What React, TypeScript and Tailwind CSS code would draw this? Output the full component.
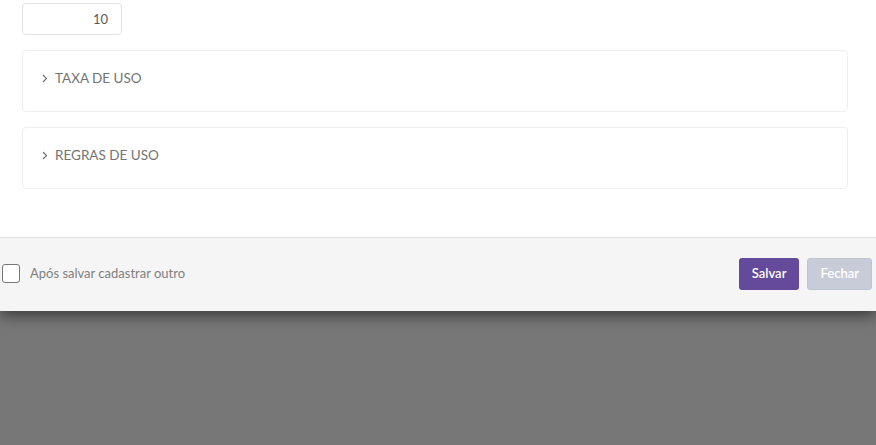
import React from 'react';

const Chevron: React.FC = () => (
  <svg width="6" height="9" viewBox="0 0 6 9" fill="none" className="shrink-0">
    <path d="M1 1l3.5 3.5L1 8" stroke="#6e6e6e" strokeWidth="1.1" />
  </svg>
);

const Section: React.FC<{ title: string }> = ({ title }) => (
  <div className="h-[62px] border border-[#eeeef4] rounded-[4px] flex items-center pl-[19px] pb-[5px] gap-[7px]">
    <Chevron />
    <span className="text-[13.5px] text-[#737373]">{title}</span>
  </div>
);

const App: React.FC = () => {
  return (
    <div className="h-[445px] bg-[#777777] overflow-hidden" style={{ fontFamily: 'Lato, "Open Sans", sans-serif' }}>
      <div className="bg-white shadow-[0_4px_14px_rgba(0,0,0,0.55)] relative">
        <div className="pl-[22px] pr-[28px] pt-[3px] pb-[48px] flex flex-col gap-[15px]">
          <input
            type="text"
            defaultValue="10"
            className="w-[100px] h-[32px] border border-[#e2e2e2] rounded-[4px] text-right pr-[13px] text-[13px] text-[#5a5a5a] outline-none"
          />
          <Section title="TAXA DE USO" />
          <Section title="REGRAS DE USO" />
        </div>
        <div className="h-[74px] bg-[#f5f5f5] border-t border-[#e2e2e2] flex items-center justify-between pl-[2px] pr-[4px] pb-[2px]">
          <label className="flex items-center gap-[10px]">
            <span className="w-[18px] h-[19px] border border-[#777] rounded-[3px] bg-white block" />
            <span className="text-[13px] text-[#808080]">Após salvar cadastrar outro</span>
          </label>
          <div className="flex gap-[8px]">
            <button className="h-[32px] px-[13px] bg-[#654a9c] text-white text-[13px] font-semibold rounded-[3px]">
              Salvar
            </button>
            <button className="h-[32px] px-[12px] bg-[#c8ccd8] text-white text-[13px] font-semibold rounded-[3px] border border-[#bfc4d1]">
              Fechar
            </button>
          </div>
        </div>
      </div>
    </div>
  );
};

export default App;
